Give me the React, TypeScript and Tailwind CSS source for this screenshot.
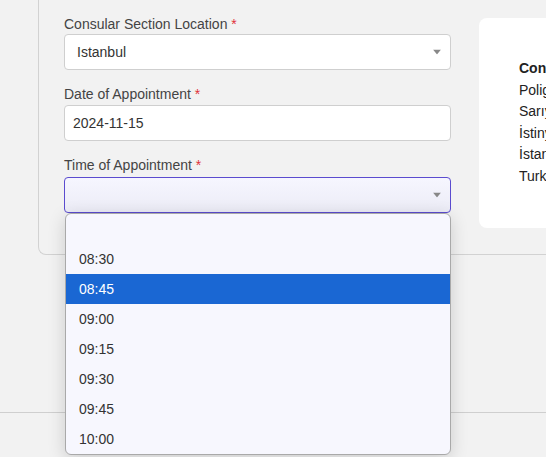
import { ReactNode } from "react";

const times = ["", "08:30", "08:45", "09:00", "09:15", "09:30", "09:45", "10:00"];

function Label({ children }: { children: ReactNode }) {
  return (
    <label className="block h-5 text-[14px] leading-5 text-[#444]">
      {children} <span className="text-[#e0303a]">*</span>
    </label>
  );
}

function Caret() {
  return (
    <svg width="8" height="5" viewBox="0 0 8 5" className="absolute right-[9px] top-1/2 -translate-y-1/2">
      <path d="M0 0 L8 0 L4 5 Z" fill="#888" />
    </svg>
  );
}

export default function App() {
  return (
    <div className="relative h-[457px] w-full overflow-hidden bg-[#f2f2f2] font-['Liberation_Sans',Arial,sans-serif]">
      <div className="ml-[38px] flex h-[255px] w-[700px] gap-[28px] rounded-bl-lg border-b border-l border-[#d2d2d2] pl-[25px]">
        <div className="w-[387px] pt-[14px]">
          <Label>Consular Section Location</Label>
          <div className="relative flex h-9 items-center rounded border border-[#cfcfcf] bg-white pl-3 text-[14px] text-[#333]">
            Istanbul
            <Caret />
          </div>

          <div className="mt-[14px]">
            <Label>Date of Appointment</Label>
          </div>
          <div className="mt-[1px] flex h-9 items-center rounded border border-[#cfcfcf] bg-white pl-2 text-[14px] text-[#333]">
            2024-11-15
          </div>

          <div className="mt-[14px]">
            <Label>Time of Appointment</Label>
          </div>
          <div className="relative mt-[2px] h-9 rounded border border-[#5b4ccf] bg-gradient-to-b from-[#f6f6ff] to-[#ececf6]">
            <Caret />
            <ul className="absolute left-0 right-[-1px] top-[35px] z-10 h-[242px] overflow-hidden rounded-md border border-[#a9a9a9] bg-[#f7f7fe] shadow-[0_4px_18px_rgba(0,0,0,0.16)]">
              {times.map((t) => (
                <li
                  key={t || "empty"}
                  className={
                    t === "08:45"
                      ? "h-[30px] bg-[#1a67d3] pl-[13px] text-[14px] leading-[30px] text-white"
                      : "h-[30px] pl-[13px] text-[14px] leading-[30px] text-[#333]"
                  }
                >
                  {t}
                </li>
              ))}
            </ul>
          </div>
        </div>

        <div className="mt-[18px] h-[210px] w-[240px] rounded-lg bg-white pl-[40px] pt-[40px] text-[14px] leading-[21.5px] text-[#222]">
          <p className="whitespace-nowrap font-bold">Consulate General</p>
          <p className="whitespace-nowrap">Poligon Mahallesi</p>
          <p className="whitespace-nowrap">Sarıyer Caddesi No. 1</p>
          <p className="whitespace-nowrap">İstinye 34460</p>
          <p className="whitespace-nowrap">İstanbul</p>
          <p className="whitespace-nowrap">Turkey</p>
        </div>
      </div>

      <div className="mt-[157px] border-t border-[#cfcfcf]" />
    </div>
  );
}
